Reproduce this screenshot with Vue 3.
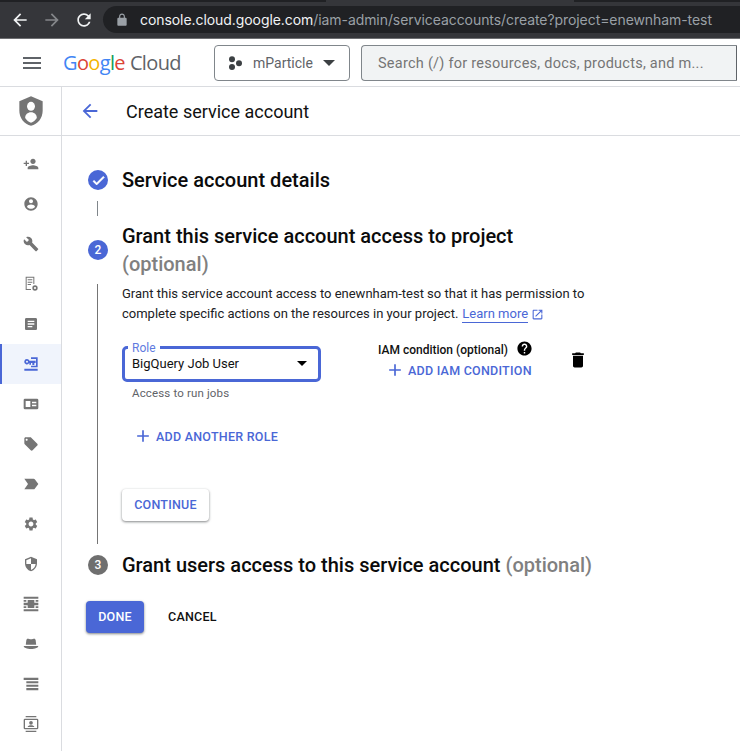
<template>
  <div class="screen">
    <div class="chrome">
      <div class="tab-strip">
        <div class="tab-edge left"></div>
        <div class="tab-edge right"></div>
      </div>
      <div class="chrome-row">
        <svg class="nav-icon" viewBox="0 0 24 24"><path fill="#f1f3f4" :d="icons.back" /></svg>
        <svg class="nav-icon off" viewBox="0 0 24 24"><path fill="#85878a" :d="icons.forward" /></svg>
        <svg class="nav-icon" viewBox="0 0 24 24"><path fill="#f1f3f4" :d="icons.refresh" /></svg>
        <div class="omnibox">
          <svg class="lock" viewBox="0 0 24 24"><path fill="#9aa0a6" :d="icons.lock" /></svg>
          <span class="host">console.cloud.google.com</span><span class="path">/iam-admin/serviceaccounts/create?project=enewnham-test</span>
        </div>
      </div>
    </div>

    <header class="topbar">
      <svg class="menu" viewBox="0 0 24 24"><path fill="#5f6368" :d="icons.menu" /></svg>
      <div class="logo">
        <span class="g-blue">G</span><span class="g-red">o</span><span class="g-yellow">o</span><span class="g-blue">g</span><span class="g-green">l</span><span class="g-red">e</span>
        <span class="cloud">Cloud</span>
      </div>
      <button class="project">
        <svg class="dots" viewBox="0 0 14 14"><circle cx="3" cy="3.300" r="3" /><circle cx="10" cy="7.300" r="3" /><circle cx="3" cy="11" r="3" /></svg>
        <span>mParticle</span>
        <span class="caret"></span>
      </button>
      <div class="search">Search (/) for resources, docs, products, and m...</div>
    </header>

    <div class="body">
      <aside class="sidebar">
        <div class="side-head">
          <svg class="shield" viewBox="0 0 24 24" preserveAspectRatio="none">
            <path fill="#757575" d="M12 1 2 4.600v7c0 5.800 4.200 10.200 10 11.400 5.800-1.200 10-5.600 10-11.400v-7L12 1z" />
            <circle fill="#fff" cx="12" cy="8.500" r="3.400" />
            <path fill="#fff" d="M12 13c-2.900 0-5 1.800-5 4.200 1.200 1.700 3 3 5 3.600 2-.6 3.800-1.900 5-3.600 0-2.400-2.100-4.200-5-4.200z" />
          </svg>
        </div>
        <div class="side-list">
          <div v-for="item in sideItems" :key="item.name" class="side-item" :class="{ active: item.active }">
            <svg viewBox="0 0 24 24"><path fill-rule="evenodd" :d="item.d" /></svg>
          </div>
        </div>
      </aside>

      <main class="main">
        <div class="page-title">
          <svg class="back" viewBox="0 0 24 24"><path fill="#4a67d6" :d="icons.back" /></svg>
          <h1>Create service account</h1>
        </div>

        <div class="stepper">
          <div class="step step-first">
            <div class="badge blue"><svg viewBox="0 0 24 24"><path fill="#fff" stroke="#fff" stroke-width="1.500" :d="icons.check" /></svg></div>
            <h2>Service account details</h2>
          </div>
          <div class="connector"></div>

          <div class="step step-second">
            <div class="badge blue">2</div>
            <h2>Grant this service account access to project <span class="opt">(optional)</span></h2>
          </div>

          <div class="step-body">
            <div class="desc">
              <div>Grant this service account access to enewnham-test so that it has permission to</div>
              <div class="desc-last">
                <span>complete specific actions on the resources in your project.</span>
                <a class="learn">Learn more</a>
                <svg class="ext" viewBox="0 0 24 24"><path fill="#4a67d6" :d="icons.external" /></svg>
              </div>
            </div>

            <div class="role-row">
              <div class="role-col">
                <div class="role-field">
                  <span class="role-label">Role</span>
                  <span class="role-value">BigQuery Job User</span>
                  <span class="caret black"></span>
                </div>
                <div class="hint">Access to run jobs</div>
              </div>
              <div class="cond-col">
                <div class="cond-title">
                  IAM condition (optional)
                  <svg viewBox="0 0 24 24"><path :d="icons.help" /></svg>
                </div>
                <a class="add-link cond-add">
                  <svg viewBox="0 0 24 24"><path fill="#4a67d6" :d="icons.plus" /></svg>
                  ADD IAM CONDITION
                </a>
              </div>
              <svg class="trash" viewBox="0 0 24 24"><path :d="icons.trash" /></svg>
            </div>

            <a class="add-link add-role">
              <svg viewBox="0 0 24 24"><path fill="#4a67d6" :d="icons.plus" /></svg>
              ADD ANOTHER ROLE
            </a>

            <button class="btn-continue">CONTINUE</button>
          </div>

          <div class="step step-third">
            <div class="badge gray">3</div>
            <h2>Grant users access to this service account <span class="opt">(optional)</span></h2>
          </div>
        </div>

        <div class="actions">
          <button class="btn-done">DONE</button>
          <button class="btn-cancel">CANCEL</button>
        </div>
      </main>
    </div>
  </div>
</template>

<script setup>
const icons = {
  back: 'M20 11H7.830l5.590-5.590L12 4l-8 8 8 8 1.410-1.410L7.830 13H20v-2z',
  forward: 'M4 11h12.170l-5.590-5.590L12 4l8 8-8 8-1.410-1.410L16.170 13H4v-2z',
  refresh: 'M17.650 6.350C16.200 4.900 14.210 4 12 4c-4.420 0-7.990 3.580-7.990 8s3.570 8 7.990 8c3.730 0 6.840-2.550 7.730-6h-2.080c-.82 2.330-3.040 4-5.650 4-3.310 0-6-2.690-6-6s2.690-6 6-6c1.660 0 3.140.69 4.220 1.780L13 11h7V4l-2.350 2.350z',
  lock: 'M18 8h-1V6c0-2.760-2.240-5-5-5S7 3.240 7 6v2H6c-1.100 0-2 .9-2 2v10c0 1.100.9 2 2 2h12c1.100 0 2-.9 2-2V10c0-1.100-.9-2-2-2zM9 6c0-1.660 1.340-3 3-3s3 1.340 3 3v2H9V6z',
  menu: 'M3 18h18v-2H3v2zm0-5h18v-2H3v2zm0-7v2h18V6H3z',
  check: 'M9 16.170L4.830 12l-1.420 1.410L9 19 21 7l-1.410-1.410z',
  external: 'M19 19H5V5h7V3H5c-1.110 0-2 .9-2 2v14c0 1.100.89 2 2 2h14c1.100 0 2-.9 2-2v-7h-2v7zM14 3v2h3.590l-9.830 9.830 1.410 1.410L19 6.410V10h2V3h-7z',
  help: 'M12 2C6.480 2 2 6.480 2 12s4.480 10 10 10 10-4.480 10-10S17.520 2 12 2zm1 17h-2v-2h2v2zm2.070-7.750l-.9.920C13.450 12.900 13 13.500 13 15h-2v-.5c0-1.100.45-2.100 1.170-2.830l1.240-1.260c.37-.36.59-.86.59-1.410 0-1.100-.9-2-2-2s-2 .9-2 2H8c0-2.210 1.790-4 4-4s4 1.790 4 4c0 .88-.36 1.680-.93 2.250z',
  plus: 'M19 13h-6v6h-2v-6H5v-2h6V5h2v6h6v2z',
  trash: 'M6 19c0 1.100.9 2 2 2h8c1.100 0 2-.9 2-2V7H6v12zM19 4h-3.500l-1-1h-5l-1 1H5v2h14V4z'
}

const sideItems = [
  { name: 'iam', d: 'M15 12c2.210 0 4-1.790 4-4s-1.790-4-4-4-4 1.790-4 4 1.790 4 4 4zm-9-2V7H4v3H1v2h3v3h2v-3h3v-2H6zm9 4c-2.670 0-8 1.340-8 4v2h16v-2c0-2.660-5.330-4-8-4z' },
  { name: 'identity', d: 'M12 2C6.480 2 2 6.480 2 12s4.480 10 10 10 10-4.480 10-10S17.520 2 12 2zm0 3c1.660 0 3 1.340 3 3s-1.340 3-3 3-3-1.340-3-3 1.340-3 3-3zm0 14.200c-2.500 0-4.710-1.280-6-3.220.03-1.990 4-3.080 6-3.080 1.990 0 5.970 1.090 6 3.080-1.290 1.940-3.500 3.220-6 3.220z' },
  { name: 'troubleshooter', d: 'M22.700 19l-9.100-9.100c.9-2.300.4-5-1.500-6.900-2-2-5-2.400-7.400-1.300L9 6 6 9 1.600 4.700C.4 7.100.9 10.100 2.900 12.100c1.900 1.900 4.600 2.400 6.900 1.500l9.100 9.100c.4.4 1 .4 1.400 0l2.300-2.300c.5-.4.5-1.100.1-1.400z' },
  { name: 'policy', d: 'M4 1h13v11h-1.500V2.500h-10v17H12V21H4V1zm3 4h7v1.500H7V5zm0 3.500h7V10H7V8.500zM7 12h5v1.500H7V12zm11 2a4 4 0 1 1 0 8 4 4 0 0 1 0-8zm0 2.400a1.600 1.600 0 1 0 0 3.200 1.600 1.600 0 0 0 0-3.200z' },
  { name: 'audit', d: 'M19 3H5c-1.100 0-2 .9-2 2v14c0 1.100.9 2 2 2h14c1.100 0 2-.9 2-2V5c0-1.100-.9-2-2-2zm-5 14H7v-2h7v2zm3-4H7v-2h10v2zm0-4H7V7h10v2z' },
  { name: 'service-accounts', active: true, d: 'M2 19h20v3H2v-3zM12 2h10v15H12v-2.500h7.500V4.500H12V2zM6 4.500a4 4 0 0 1 3.700 2.500H19v3.500h-2v3h-3v-3h-2v2.500H9.500v-2.500h-.2A4 4 0 1 1 6 4.500zm0 2.500a1.500 1.500 0 1 0 0 3 1.500 1.500 0 0 0 0-3z' },
  { name: 'workload', d: 'M3 4h18a2 2 0 0 1 2 2v12a2 2 0 0 1-2 2H3a2 2 0 0 1-2-2V6a2 2 0 0 1 2-2zm1 3.500v9h7v-9H4zm9.500 1v2.500H20V8.500h-6.500zm0 4.500v2.500H20V13h-6.500z' },
  { name: 'tags', d: 'M21.410 11.580l-9-9C12.050 2.220 11.550 2 11 2H4c-1.100 0-2 .9-2 2v7c0 .55.22 1.050.59 1.420l9 9c.36.36.86.58 1.410.58s1.050-.22 1.410-.59l7-7c.37-.36.59-.86.59-1.410s-.23-1.060-.59-1.420zM5.500 7C4.670 7 4 6.330 4 5.500S4.670 4 5.500 4 7 4.670 7 5.500 6.330 7 5.500 7z' },
  { name: 'labels', d: 'M2 20l14 .01c.67 0 1.270-.33 1.630-.84L23 12l-5.370-7.160c-.36-.51-.96-.84-1.630-.84L2 4.010 7.500 12 2 20z' },
  { name: 'settings', d: 'M19.140 12.940c.04-.3.06-.61.06-.94 0-.32-.02-.64-.07-.94l2.030-1.580c.18-.14.23-.41.12-.61l-1.920-3.320c-.12-.22-.37-.29-.59-.22l-2.390.96c-.5-.38-1.030-.7-1.620-.94l-.36-2.540c-.04-.24-.24-.41-.48-.41h-3.840c-.24 0-.43.17-.47.41l-.36 2.540c-.59.24-1.130.57-1.620.94l-2.390-.96c-.22-.08-.47 0-.59.22L2.740 8.870c-.12.21-.08.47.12.61l2.030 1.580c-.05.3-.09.63-.09.94s.02.64.07.94l-2.030 1.580c-.18.14-.23.41-.12.61l1.920 3.320c.12.22.37.29.59.22l2.390-.96c.5.38 1.030.7 1.620.94l.36 2.540c.05.24.24.41.48.41h3.840c.24 0 .44-.17.47-.41l.36-2.540c.59-.24 1.130-.56 1.620-.94l2.390.96c.22.08.47 0 .59-.22l1.920-3.320c.12-.22.07-.47-.12-.61l-2.010-1.580zM12 15.600c-1.980 0-3.600-1.620-3.600-3.600s1.620-3.600 3.600-3.600 3.600 1.620 3.600 3.600-1.620 3.600-3.600 3.600z' },
  { name: 'privacy', d: 'M12 1L3 5v6c0 5.550 3.840 10.740 9 12 5.160-1.260 9-6.450 9-12V5l-9-4zm0 10.990h7c-.53 4.120-3.280 7.790-7 8.940V12H5V6.300l7-3.110v8.800z' },
  { name: 'frame', d: 'M1 1h22v3H1V1zm0 19h22v3H1v-3zM7 6h10v4h6v4h-6v4H7v-4H1v-4h6V6zM1 6h4v2.500H1V6zm18 0h4v2.500h-4V6zM1 15.500h4V18H1v-2.500zm18 0h4V18h-4v-2.500z' },
  { name: 'hat', d: 'M7 4c1.500 0 3 1 5 1s3.500-1 5-1c1.200 0 1.700 1 2 2.500l.8 6.500H4.200L5 6.500C5.300 5 5.800 4 7 4zM1 15h22c0 2.500-5 4.500-11 4.500S1 17.500 1 15z' },
  { name: 'lines', d: 'M1 2.500h22v3.500H1V2.500zm4 5.500h18v3H5V8zm0 5h18v3H5v-3zm0 5h18v3.500H5V18z' },
  { name: 'contact', d: 'M4 0h16v2H4V0zm0 22h16v2H4v-2zM3 4h18a2 2 0 0 1 2 2v12a2 2 0 0 1-2 2H3a2 2 0 0 1-2-2V6a2 2 0 0 1 2-2zm0 2v12h18V6H3zm9 1.500a2.800 2.800 0 1 1 0 5.600 2.800 2.800 0 0 1 0-5.600zm0 6.300c2.400 0 5 1 5 2.700H7c0-1.700 2.600-2.700 5-2.700z' }
]
</script>

<style>
html, body {
  margin: 0;
  background: #fff;
  overflow: hidden;
}
</style>

<style scoped>
.screen {
  width: 740px;
  height: 751px;
  overflow: hidden;
  font-family: Roboto, "Liberation Sans", sans-serif;
  color: #202124;
  display: flex;
  flex-direction: column;
}
.chrome {
  height: 39px;
  background: #35363a;
  border-bottom: 1px solid #6e6f72;
  box-sizing: border-box;
  flex-shrink: 0;
}
.tab-strip {
  height: 6px;
  display: flex;
  justify-content: space-between;
}
.tab-edge {
  height: 2px;
  background: #202124;
}
.tab-edge.left {
  width: 326px;
}
.tab-edge.right {
  width: 166px;
}
.chrome-row {
  display: flex;
  align-items: center;
  height: 27px;
  padding-left: 10px;
}
.nav-icon {
  width: 20px;
  height: 20px;
  margin-right: 12px;
  flex-shrink: 0;
}
.nav-icon:nth-child(3) {
  margin-right: 9px;
}
.omnibox {
  flex: 1;
  height: 27px;
  background: #202124;
  border-radius: 14px 0 0 14px;
  display: flex;
  align-items: center;
  padding-left: 12px;
  font-size: 14px;
  white-space: nowrap;
  overflow: hidden;
  font-family: Inter, Roboto, sans-serif;
  letter-spacing: -0.07px;
}
.lock {
  width: 14px;
  height: 14px;
  margin-right: 11px;
  flex-shrink: 0;
}
.host {
  color: #f1f3f4;
}
.path {
  color: #9aa0a6;
}

.topbar {
  height: 47px;
  border-bottom: 1px solid #dadce0;
  box-sizing: content-box;
  display: flex;
  align-items: center;
  padding-left: 20px;
  flex-shrink: 0;
}
.menu {
  width: 24px;
  height: 24px;
}
.logo {
  margin-left: 19px;
  font-family: "Open Sans", Lato, sans-serif;
  font-size: 20px;
  letter-spacing: -0.65px;
  width: 151px;
  white-space: nowrap;
  flex-shrink: 0;
}
.g-blue { color: #4285f4; }
.g-red { color: #db4437; }
.g-yellow { color: #f4b400; }
.g-green { color: #0f9d58; }
.cloud {
  color: #5f6368;
  margin-left: 5px;
}
.project {
  width: 136px;
  height: 36px;
  border: 1px solid #80868b;
  border-radius: 4px;
  background: #fff;
  display: flex;
  align-items: center;
  padding: 0 0 0 14px;
  font-family: inherit;
  font-size: 14px;
  color: #5f6368;
  box-sizing: border-box;
  flex-shrink: 0;
}
.dots {
  width: 14px;
  height: 14px;
  fill: #3c4043;
  margin-right: 10px;
}
.caret {
  width: 0;
  height: 0;
  border-left: 6px solid transparent;
  border-right: 6px solid transparent;
  border-top: 6px solid #3c4043;
  margin-left: 10px;
}
.search {
  width: 376px;
  height: 36px;
  margin-left: 11px;
  background: #f1f3f4;
  border: 1px solid #80868b;
  border-right-color: #5f6368;
  box-sizing: border-box;
  border-radius: 4px 0 0 4px;
  font-size: 14.500px;
  line-height: 35px;
  padding-left: 16px;
  color: #757575;
  letter-spacing: 0.25px;
  white-space: nowrap;
  flex-shrink: 0;
}

.body {
  flex: 1;
  display: flex;
  min-height: 0;
}
.sidebar {
  width: 62px;
  border-right: 1px solid #dadce0;
  box-sizing: border-box;
  flex-shrink: 0;
}
.side-head {
  height: 48px;
  border-bottom: 1px solid #dadce0;
  display: flex;
  align-items: center;
  justify-content: center;
}
.shield {
  width: 28px;
  height: 32px;
}
.side-list {
  padding-top: 8px;
}
.side-item {
  height: 40px;
  display: flex;
  align-items: center;
  justify-content: center;
  box-sizing: border-box;
}
.side-item svg {
  width: 16px;
  height: 16px;
  fill: #757575;
}
.side-item.active {
  background: #f0f4fc;
  border-left: 2px solid #4a67d6;
  padding-right: 2px;
}
.side-item.active svg {
  fill: #4a67d6;
}

.main {
  flex: 1;
  min-width: 0;
}
.page-title {
  height: 48px;
  border-bottom: 1px solid #dadce0;
  display: flex;
  align-items: center;
  padding-left: 17px;
}
.back {
  width: 22px;
  height: 22px;
}
.page-title h1 {
  margin: 0 0 0 25px;
  font-size: 18px;
  font-weight: 400;
  color: #111;
}

.stepper {
  padding: 30px 0 0 26px;
}
.step {
  display: flex;
  align-items: center;
  gap: 14px;
}
.step h2 {
  margin: 0;
  font-size: 20px;
  font-weight: 500;
  line-height: 28px;
  color: #0b0b0b;
}
.step h2 .opt {
  color: #808080;
}
.badge {
  width: 20px;
  height: 20px;
  border-radius: 50%;
  color: #fff;
  font-size: 12px;
  font-weight: 500;
  display: flex;
  align-items: center;
  justify-content: center;
  flex-shrink: 0;
}
.badge svg {
  width: 15px;
  height: 15px;
}
.badge.blue { background: #4a67d6; }
.badge.gray { background: #6f6f6f; }
.connector {
  width: 1px;
  height: 15px;
  background: #80868b;
  margin: 7px 0 6px 9px;
}
.step-second h2 {
  width: 440px;
}
.step-body {
  margin: 6px 0 0 9px;
  border-left: 1px solid #757575;
  padding-left: 24px;
  height: 260px;
  box-sizing: border-box;
}
.desc {
  width: 480px;
  font-size: 13px;
  line-height: 20px;
  color: #202124;
}
.desc-last {
  display: flex;
  align-items: center;
}
.learn {
  color: #4a67d6;
  border-bottom: 1px solid #4a67d6;
  line-height: 16px;
  margin-left: 4px;
}
.ext {
  width: 13px;
  height: 13px;
  margin-left: 3px;
}
.role-row {
  display: flex;
  margin-top: 22px;
}
.role-col {
  width: 199px;
}
.role-field {
  position: relative;
  height: 36px;
  border: 3px solid #4a67d6;
  border-radius: 5px;
  box-sizing: border-box;
  font-size: 13px;
  padding: 0 11px 2px 7px;
  display: flex;
  align-items: center;
  justify-content: space-between;
  color: #111;
}
.role-label {
  position: absolute;
  left: 3px;
  top: -8px;
  padding: 0 4px;
  background: #fff;
  font-size: 12px;
  line-height: 14px;
  color: #5f7be0;
}
.caret.black {
  border-left-width: 5.500px;
  border-right-width: 5.500px;
  border-top: 5.500px solid #000;
}
.hint {
  margin: 4px 0 0 10px;
  font-size: 11.500px;
  line-height: 14px;
  color: #5f6368;
  letter-spacing: 0.15px;
}
.cond-col {
  margin-left: 57px;
  margin-top: -5px;
  width: 178px;
}
.cond-title {
  display: flex;
  align-items: center;
  gap: 8px;
  height: 18px;
  font-size: 12px;
  font-weight: 500;
  color: #111;
  white-space: nowrap;
}
.cond-title svg {
  width: 17px;
  height: 17px;
  margin-top: -3px;
}
.add-link {
  display: flex;
  align-items: center;
  font-size: 12.500px;
  font-weight: 500;
  letter-spacing: 0.25px;
  color: #4a67d6;
  white-space: nowrap;
}
.add-link svg {
  width: 20px;
  height: 20px;
  margin-right: 3px;
}
.cond-add {
  margin: 1px 0 0 7px;
}
.trash {
  width: 20px;
  height: 20px;
  margin: 4px 0 0 12px;
  flex-shrink: 0;
}
.add-role {
  margin: 26px 0 0 11px;
}
.btn-continue {
  display: block;
  margin-top: 43px;
  width: 87px;
  height: 32px;
  border: none;
  border-radius: 4px;
  background: #fff;
  color: #4a67d6;
  font-family: inherit;
  font-size: 12.500px;
  font-weight: 500;
  letter-spacing: 0.25px;
  padding: 0 0 2px;
  box-shadow: 0 1px 3px rgba(60, 64, 67, 0.4), 0 1px 2px rgba(60, 64, 67, 0.3);
}
.step-third {
  margin-top: 7px;
}
.actions {
  display: flex;
  align-items: center;
  margin: 22px 0 0 24px;
}
.actions button {
  font-family: inherit;
  font-size: 12.500px;
  font-weight: 500;
  letter-spacing: 0.25px;
  height: 32px;
  border: none;
  border-radius: 4px;
  padding: 0 0 1px;
}
.btn-done {
  width: 58px;
  background: #4a67d6;
  color: #fff;
  box-shadow: 0 1px 3px rgba(60, 64, 67, 0.4), 0 1px 2px rgba(60, 64, 67, 0.3);
}
.btn-cancel {
  background: transparent;
  color: #111;
  margin-left: 24px;
}
</style>
